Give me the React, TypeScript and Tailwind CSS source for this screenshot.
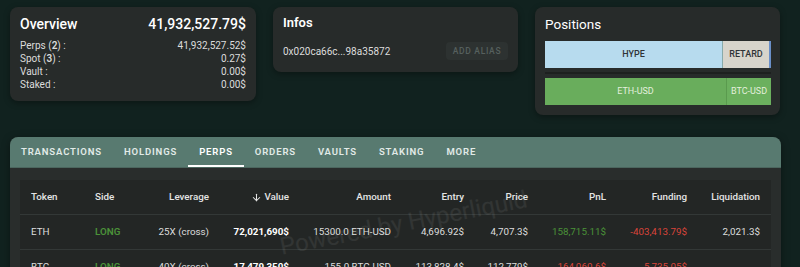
import { ArrowDown } from 'lucide-react'

const tabs = ['Transactions', 'Holdings', 'Perps', 'Orders', 'Vaults', 'Staking', 'More']

const overviewRows = [
  { label: 'Perps', count: 2, value: '41,932,527.52$' },
  { label: 'Spot', count: 3, value: '0.27$' },
  { label: 'Vault', count: null, value: '0.00$' },
  { label: 'Staked', count: null, value: '0.00$' },
]

const positions = [
  {
    token: 'ETH', side: 'LONG', leverage: '25X (cross)', value: '72,021,690$',
    amount: '15300.0 ETH-USD', entry: '4,696.92$', price: '4,707.3$',
    pnl: '158,715.11$', funding: '-403,413.79$', liq: '2,021.3$',
  },
  {
    token: 'BTC', side: 'LONG', leverage: '40X (cross)', value: '17,479,350$',
    amount: '155.0 BTC-USD', entry: '113,828.4$', price: '112,779$',
    pnl: '-164,060.6$', funding: '-5,735.05$', liq: '',
  },
]

const cols = 'grid grid-cols-[64px_56px_79px_80px_102px_73px_64px_78px_81px_73px]'

function Card({ className, children }: { className: string; children: React.ReactNode }) {
  return (
    <div className={`rounded-lg bg-[#272b2a] shadow-[0_2px_6px_rgba(0,0,0,0.35)] ${className}`}>
      {children}
    </div>
  )
}

export default function App() {
  return (
    <div className="w-[800px] h-[267px] overflow-hidden bg-[#11221f] font-['Roboto',sans-serif] text-[#e6e6e6]">
      <div className="flex items-start pt-[7px] pl-[10px] gap-[17px]">
        {/* Overview */}
        <Card className="w-[246px] h-[94px] px-[10px] pt-[8px]">
          <div className="flex items-center justify-between leading-[18px]">
            <span className="text-[14px] font-medium text-white">Overview</span>
            <span className="text-[14px] font-medium text-white">41,932,527.79$</span>
          </div>
          <div className="mt-[6px] flex flex-col text-[10px] leading-[13px] text-[#dcdcdc]">
            {overviewRows.map(r => (
              <div key={r.label} className="flex justify-between">
                <span>
                  {r.label}
                  {r.count !== null && <> (<b className="font-semibold">{r.count}</b>)</>} :
                </span>
                <span>{r.value}</span>
              </div>
            ))}
          </div>
        </Card>

        {/* Infos */}
        <Card className="w-[245px] h-[65px] px-[10px] pt-[7px]">
          <div className="text-[13px] leading-[17px] font-semibold text-white">Infos</div>
          <div className="mt-[11px] flex items-center justify-between">
            <span className="text-[10px] text-[#dcdcdc]">0x020ca66c...98a35872</span>
            <span className="w-[62px] h-[18px] flex items-center justify-center rounded bg-[#2d3231] text-[8.5px] font-medium tracking-[0.08em] text-[#56605e]">
              ADD ALIAS
            </span>
          </div>
        </Card>

        {/* Positions */}
        <Card className="w-[245px] h-[108px] px-[10px] pt-[8px]">
          <div className="text-[13.5px] leading-[18px] text-white">Positions</div>
          <div className="mt-[8px] flex h-[27px] w-[226px] text-[9px] font-medium text-[#2f3336] border-r-2 border-[#6a8fc8]">
            <div className="w-[178px] flex items-center justify-center bg-[#b7dbee] border-r border-[#8aa]">HYPE</div>
            <div className="flex-1 flex items-center justify-center bg-[#d7d4cb]">RETARD</div>
          </div>
          <div className="mt-[4px] h-[2px] w-[226px] bg-[#1d201f]" />
          <div className="mt-[4px] flex h-[27px] w-[226px] text-[9px] text-[#e3efdc]">
            <div className="w-[182px] flex items-center justify-center bg-[#69ad5c] border-r border-[#5a9a4e]">ETH-USD</div>
            <div className="flex-1 flex items-center justify-center bg-[#6bb05e]">BTC-USD</div>
          </div>
        </Card>
      </div>

      {/* Tabs panel */}
      <div className="relative ml-[10px] mt-[22px] w-[771px] h-[200px] rounded-t-lg bg-[#292d2c] shadow-[0_2px_8px_rgba(0,0,0,0.4)] overflow-hidden">
        <div className="flex h-[31px] items-stretch bg-[#587a70] border-b border-[#4b665e]">
          {tabs.map(t => (
            <div
              key={t}
              className={`relative flex items-center px-[11px] text-[9.5px] font-semibold uppercase tracking-[0.09em] ${t === 'Perps' ? 'text-white' : 'text-[#e2ebe8]'}`}
            >
              {t}
              {t === 'Perps' && <span className="absolute left-0 right-0 bottom-0 h-[2px] bg-white" />}
            </div>
          ))}
        </div>

        <div className="mx-[10px] mt-[12px] bg-[#232625] text-[9.8px]">
          <div className={`${cols} h-[35px] items-center border-b border-[#333837] font-medium text-[#e4e4e4]`}>
            <div className="pl-[11px]">Token</div>
            <div className="pl-[11px]">Side</div>
            <div className="text-right pr-[10px]">Leverage</div>
            <div className="flex items-center justify-end gap-[2px] pr-[10px]">
              <ArrowDown size={11} strokeWidth={2.2} />
              Value
            </div>
            <div className="text-right pr-[10px]">Amount</div>
            <div className="text-right pr-[10px]">Entry</div>
            <div className="text-right pr-[10px]">Price</div>
            <div className="text-right pr-[10px]">PnL</div>
            <div className="text-right pr-[10px]">Funding</div>
            <div className="text-right pr-[10px]">Liquidation</div>
          </div>
          {positions.map(p => (
            <div key={p.token} className={`${cols} h-[35px] items-center border-b border-[#333837] text-[#dedede]`}>
              <div className="pl-[11px]">{p.token}</div>
              <div className="pl-[11px] font-semibold text-[#4b9139]">{p.side}</div>
              <div className="text-right pr-[10px]">{p.leverage}</div>
              <div className="text-right pr-[10px] font-bold text-white">{p.value}</div>
              <div className="text-right pr-[10px]">{p.amount}</div>
              <div className="text-right pr-[10px]">{p.entry}</div>
              <div className="text-right pr-[10px]">{p.price}</div>
              <div className={`text-right pr-[10px] ${p.pnl.startsWith('-') ? 'text-[#d9443a]' : 'text-[#4a9238]'}`}>{p.pnl}</div>
              <div className="text-right pr-[10px] text-[#d9443a]">{p.funding}</div>
              <div className="text-right pr-[10px]">{p.liq}</div>
            </div>
          ))}
        </div>

        {/* watermark */}
        <div className="pointer-events-none absolute left-[268px] top-[68px] -rotate-[11deg] text-[24px] text-white/[0.07] whitespace-nowrap">
          Powered by Hyperliquid
        </div>
      </div>
    </div>
  )
}
